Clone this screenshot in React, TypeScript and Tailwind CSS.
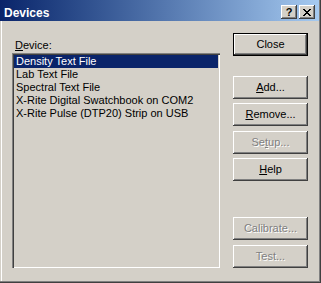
import React from 'react';

const devices = [
    'Density Text File',
    'Lab Text File',
    'Spectral Text File',
    'X-Rite Digital Swatchbook on COM2',
    'X-Rite Pulse (DTP20) Strip on USB',
];

const bevel =
    'shadow-[inset_-1px_-1px_0_#404040,inset_1px_1px_0_#ffffff,inset_-2px_-2px_0_#808080,inset_2px_2px_0_#d4d0c8]';

interface ButtonProps {
    label: string;
    mnemonic?: number;
    disabled?: boolean;
    isDefault?: boolean;
    className?: string;
}

function DialogButton({ label, mnemonic, disabled, isDefault, className = '' }: ButtonProps) {
    const text =
        mnemonic === undefined ? (
            label
        ) : (
            <>
                {label.slice(0, mnemonic)}
                <span className="underline underline-offset-[1px]">{label[mnemonic]}</span>
                {label.slice(mnemonic + 1)}
            </>
        );

    const face = (
        <div
            className={`flex-1 flex items-center justify-center ${bevel} ${
                disabled ? 'text-[#808080] [text-shadow:1px_1px_0_#ffffff]' : 'text-black'
            }`}
        >
            {text}
        </div>
    );

    return (
        <div
            className={`w-[75px] h-[23px] flex bg-[#d4d0c8] text-[11px] leading-[13px] ${
                isDefault ? 'border border-black' : ''
            } ${className}`}
        >
            {face}
        </div>
    );
}

export default function App() {
    return (
        <div className="w-[321px] h-[283px] bg-[#d4d0c8] flex flex-col font-['Liberation_Sans',Arial,sans-serif] text-[11px] shadow-[inset_-1px_-1px_0_#404040,inset_-2px_-2px_0_#808080,inset_1px_0_0_#d4d0c8,inset_2px_0_0_#ffffff]">
            {/* title bar */}
            <div className="h-[21px] mr-[2px] flex items-start bg-linear-to-r from-[#0a246a] to-[#a6caf0] pl-[4px] pr-[4px]">
                <span className="mt-[6px] text-[12px] leading-[14px] font-bold text-white">Devices</span>
                <div className="ml-auto mt-[5px] flex gap-[2px]">
                    <div className={`w-[16px] h-[14px] bg-[#d4d0c8] flex items-center justify-center ${bevel}`}>
                        <span className="text-[11px] leading-[11px] font-bold text-black">?</span>
                    </div>
                    <div className={`w-[16px] h-[14px] bg-[#d4d0c8] flex items-center justify-center ${bevel}`}>
                        <svg width="8" height="7" viewBox="0 0 8 7" shapeRendering="crispEdges">
                            <path
                                d="M0 0h2v1h-2zM6 0h2v1h-2zM1 1h2v1h-2zM5 1h2v1h-2zM2 2h4v1h-4zM3 3h2v1h-2zM2 4h4v1h-4zM1 5h2v1h-2zM5 5h2v1h-2zM0 6h2v1h-2zM6 6h2v1h-2z"
                                fill="#000"
                            />
                        </svg>
                    </div>
                </div>
            </div>

            {/* body */}
            <div className="flex flex-1">
                <div className="pl-[12px] pt-[18px] flex flex-col">
                    <div className="h-[13px] leading-[13px] pl-[3px] text-black">
                        <span className="underline underline-offset-[1px]">D</span>evice:
                    </div>
                    <div className="mt-[1px] w-[208px] h-[215px] p-[2px] bg-[#d4d0c8] shadow-[inset_1px_1px_0_#808080,inset_2px_2px_0_#404040,inset_-1px_-1px_0_#ffffff,inset_-2px_-2px_0_#d4d0c8]">
                        {devices.map((d, i) => (
                            <div
                                key={d}
                                className={`h-[13px] leading-[13px] pl-[2px] whitespace-nowrap ${
                                    i === 0 ? 'bg-[#0a246a] text-white' : 'text-black'
                                }`}
                            >
                                {d}
                            </div>
                        ))}
                    </div>
                </div>

                <div className="ml-[13px] pt-[12px] flex flex-col">
                    <DialogButton label="Close" isDefault />
                    <DialogButton label="Add..." mnemonic={0} className="mt-[20px]" />
                    <DialogButton label="Remove..." mnemonic={0} className="mt-[4px]" />
                    <DialogButton label="Setup..." mnemonic={2} disabled className="mt-[5px]" />
                    <DialogButton label="Help" mnemonic={0} className="mt-[4px]" />
                    <DialogButton label="Calibrate..." disabled className="mt-[36px]" />
                    <DialogButton label="Test..." disabled className="mt-[5px]" />
                </div>
            </div>
        </div>
    );
}
